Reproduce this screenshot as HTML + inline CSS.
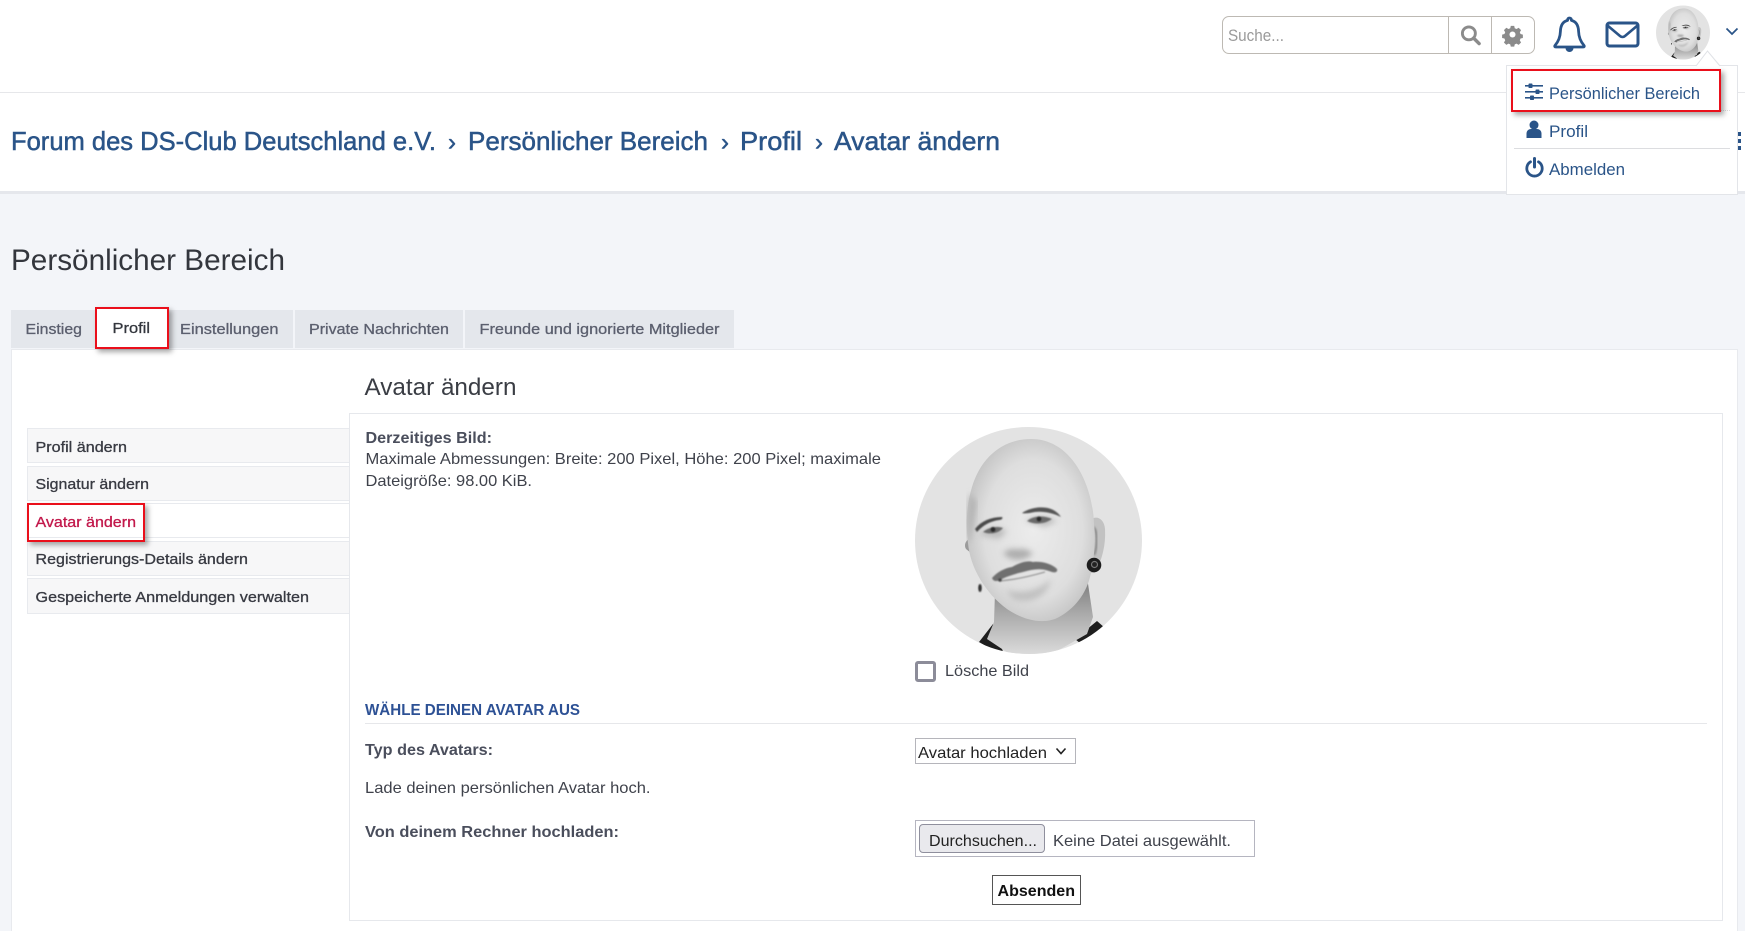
<!DOCTYPE html>
<html lang="de"><head><meta charset="utf-8"><title>Avatar ändern</title>
<style>
html,body{margin:0;padding:0;width:1745px;height:931px;overflow:hidden;background:#f3f5f9}
div{position:absolute;box-sizing:border-box}
svg{position:absolute;overflow:visible}
text{font-family:"Liberation Sans",sans-serif;white-space:pre}
.m{stroke:currentColor;stroke-width:.3px}
.h{stroke:currentColor;stroke-width:.5px}
.b{font-weight:700}
.nav{background:#f7f7f8;border:1px solid #e8eaee;border-right:0;left:27px;width:322px}
.tab{background:#e4e7ec;top:310px;height:38px}
.red{border:2px solid #ea0f1b;box-shadow:3px 3px 5px rgba(0,0,0,.35)}
</style></head><body>
<svg width="0" height="0" style="position:absolute">
<defs>
<radialGradient id="skin" cx=".52" cy=".5" r=".62"><stop offset="0" stop-color="#ececec"/><stop offset=".62" stop-color="#dedede"/><stop offset=".88" stop-color="#c4c4c4"/><stop offset="1" stop-color="#a6a6a6"/></radialGradient>
<linearGradient id="neck" x1="0" y1="0" x2="0" y2="1"><stop offset="0" stop-color="#777"/><stop offset=".45" stop-color="#a8a8a8"/><stop offset="1" stop-color="#dcdcdc"/></linearGradient>
<filter id="b05"><feGaussianBlur stdDeviation=".7"/></filter>
<filter id="b1"><feGaussianBlur stdDeviation="1"/></filter>
<filter id="b2"><feGaussianBlur stdDeviation="3"/></filter>
<clipPath id="cc"><circle cx="113.500" cy="113.500" r="113.500"/></clipPath>
<symbol id="face" viewBox="0 0 227 227">
<g clip-path="url(#cc)">
<rect width="227" height="227" fill="#e3e3e3"/>
<path d="M64 215L78 197L90 230Z" fill="#1e1e1e"/>
<path d="M160 212L182 194L190 201L172 222Z" fill="#1e1e1e"/>
<path d="M80 165L79 195L72 212L96 228L135 228L172 207L178 190L172 150Z" fill="url(#neck)"/>
<path d="M175 93C181 88 189 91 190 102C191 118 187 133 180 146L172 146Z" fill="#c2c2c2"/>
<path d="M178 100C183 104 183 118 179 128" fill="none" stroke="#7d7d7d" stroke-width="2" filter="url(#b1)"/>
<path d="M54 112C50 114 49 119 51 122L56 126Z" fill="#9a9a9a"/>
<path d="M116 12C88 12 66 30 57 60C51 80 51 98 53 116C55 140 70 166 92 182C108 193 126 197 140 192C156 185 170 170 175 150C179 135 181 112 179 97C178 60 158 12 116 12Z" fill="url(#skin)"/>
<path d="M55 66C51 86 52 104 54 118C58 105 60 90 62 75Z" fill="#b5b5b5" filter="url(#b2)"/>
<g filter="url(#b2)" opacity=".75">
<path d="M88 126C96 136 112 134 118 126L110 122L95 122Z" fill="#9c9c9c"/>
<path d="M90 162C104 168 124 164 136 152C132 172 112 178 98 172Z" fill="#b8b8b8"/>
<path d="M64 108C72 100 84 100 92 104L84 112Z" fill="#b0b0b0"/>
<path d="M110 94C120 88 132 88 142 94L130 100Z" fill="#b0b0b0"/>
</g>
<g filter="url(#b05)">
<path d="M60 102C66 94 76 90 87 90C88 91 87 93 84 93C76 94 68 98 62 105Z" fill="#4a4a4a"/>
<path d="M107 86C116 80 128 79 136 82C141 84 144 87 146 90C138 86 128 84 120 85C115 86 110 87 107 86Z" fill="#555"/>
<path d="M68 105C74 100 82 99 88 101C84 106 76 108 68 105Z" fill="#6b6b6b"/>
<path d="M112 94C118 89 128 88 137 92C130 97 120 98 112 94Z" fill="#6b6b6b"/>
<circle cx="78" cy="102.500" r="2.600" fill="#2c2c2c"/><circle cx="124" cy="92" r="2.600" fill="#2c2c2c"/>
<path d="M77 151C82 145 90 141 97 140C104 136 112 133 118 135C127 134 137 137 142 142C143 146 139 146 134 144C126 141 118 142 108 145C99 147 90 150 85 153C81 155 78 154 77 151Z" fill="#707070"/>
<path d="M84 154C98 153 116 149 130 145" fill="none" stroke="#8a8a8a" stroke-width="1.100"/>
<circle cx="85" cy="153" r="1.800" fill="#444"/>
</g>
<circle cx="179" cy="138" r="7.300" fill="#1d1d1d"/><circle cx="179.500" cy="137.500" r="3.600" fill="#777"/><circle cx="179.500" cy="137.500" r="2.400" fill="#222"/>
<ellipse cx="65" cy="161" rx="1.800" ry="4" fill="#333" filter="url(#b05)"/>
</g>
</symbol>
</defs></svg>

<!-- header -->
<div style="left:0;top:0;width:1745px;height:93px;background:#fff;border-bottom:1px solid #e6e7ea"></div>
<div style="left:0;top:93px;width:1745px;height:101px;background:#fff;border-bottom:3px solid #e5e7ec"></div>

<!-- search -->
<div style="left:1222px;top:16px;width:313px;height:38px;border:1px solid #bdb9b3;border-radius:7px;background:#fff"></div>
<div style="left:1448px;top:16px;width:1px;height:38px;background:#bdb9b3"></div>
<div style="left:1491px;top:16px;width:1px;height:38px;background:#bdb9b3"></div>
<svg style="left:1460px;top:24px" width="21" height="22" viewBox="0 0 22 22"><circle cx="9.300" cy="9.300" r="6.800" fill="none" stroke="#8b8b8b" stroke-width="3"/><path d="M14.300 14.300L20 20" stroke="#8b8b8b" stroke-width="3.600" stroke-linecap="round"/></svg>
<svg style="left:1503px;top:25px" width="19" height="19" viewBox="-10 -10 20 20"><path d="M-1.900-9.500h3.800l.6 2.600 2 .8 2.300-1.400 2.700 2.700-1.400 2.300.8 2 2.600.6v3.800l-2.600.6-.8 2 1.400 2.300-2.700 2.700-2.300-1.400-2 .8-.6 2.600h-3.800l-.6-2.600-2-.8-2.300 1.400-2.700-2.700 1.400-2.300-.8-2-2.600-.6v-3.800l2.600-.6.8-2-1.400-2.300 2.700-2.700 2.300 1.400 2-.8z" fill="#8b8b8b" transform="scale(.95)"/><circle r="3.200" fill="#fff"/></svg>

<!-- bell -->
<svg style="left:1553px;top:15px" width="33" height="37" viewBox="0 0 33 37"><path d="M16.500 3C15 3 14.600 4 14.600 5.400C9.500 6.600 7.600 11 7.400 16.500C7.200 23 5 27 2 30.500C1.400 31.300 1.800 32 2.800 32H30.200C31.200 32 31.600 31.300 31 30.500C28 27 25.800 23 25.600 16.500C25.400 11 23.500 6.600 18.400 5.400C18.400 4 18 3 16.500 3Z" fill="#fff" stroke="#2a5488" stroke-width="2.800" stroke-linejoin="round"/><path d="M12.500 33A4 4 0 0 0 20.500 33Z" fill="#2a5488"/></svg>
<!-- mail -->
<svg style="left:1605px;top:21px" width="35" height="27" viewBox="0 0 35 27"><rect x="2" y="2" width="31" height="23" rx="2.500" fill="#fff" stroke="#2a5488" stroke-width="3"/><path d="M2.500 4.500L15 15C16.500 16.300 18.500 16.300 20 15L32.500 4.500" fill="none" stroke="#2a5488" stroke-width="2.600"/></svg>
<!-- avatar small -->
<svg style="left:1656px;top:5px" width="54" height="55"><use href="#face" width="54" height="55"/></svg>
<svg style="left:1725px;top:27px" width="14" height="9" viewBox="0 0 14 9"><path d="M1.500 1.500L7 7L12.500 1.500" fill="none" stroke="#2a5488" stroke-width="1.700"/></svg>

<!-- kebab dots -->
<div style="left:1738px;top:132px;width:3px;height:4px;background:#2a5488"></div>
<div style="left:1738px;top:139px;width:3px;height:4px;background:#2a5488"></div>
<div style="left:1738px;top:146px;width:3px;height:4px;background:#2a5488"></div>

<!-- dropdown -->
<div style="left:1506px;top:65px;width:232px;height:130px;background:#fff;border:1px solid #e3e5e9"></div>
<svg style="left:1696px;top:50px" width="24" height="16" viewBox="0 0 24 16"><path d="M0 16L11.500 1L24 16" fill="#fff" stroke="#e0e2e6"/></svg>
<div style="left:1514px;top:110px;width:216px;height:1px;border-top:1px dotted #ddd"></div>
<div style="left:1514px;top:148px;width:216px;height:1px;background:#dcdde0"></div>
<div class="red" style="left:1511px;top:69px;width:210px;height:43px"></div>
<svg style="left:1525px;top:83px" width="18" height="18" viewBox="0 0 18 18" fill="#2a5488"><rect y="2" width="18" height="1.600"/><rect y="8" width="18" height="1.600"/><rect y="14" width="18" height="1.600"/><rect x="3.500" y="0.500" width="4" height="4.500" rx=".8"/><rect x="10.500" y="6.500" width="4" height="4.500" rx=".8"/><rect x="5" y="12.500" width="4" height="4.500" rx=".8"/></svg>
<svg style="left:1526px;top:120px" width="16" height="18" viewBox="0 0 16 18" fill="#2a5488"><circle cx="8" cy="5" r="4.500"/><path d="M0.500 18V13.500C0.500 10.500 3 9 5 9H11C13 9 15.500 10.500 15.500 13.500V18Z"/></svg>
<svg style="left:1525px;top:157px" width="19" height="20" viewBox="0 0 19 20"><path d="M5.500 4.800A7.700 7.700 0 1 0 13.500 4.800" fill="none" stroke="#2a5488" stroke-width="2.800" stroke-linecap="round"/><path d="M9.500 1.500V10" stroke="#2a5488" stroke-width="3" stroke-linecap="round"/></svg>

<!-- tabs -->
<div class="tab" style="left:11px;width:85px"></div>
<div class="tab" style="left:150px;width:143px"></div>
<div class="tab" style="left:295px;width:168px"></div>
<div class="tab" style="left:465px;width:269px"></div>

<!-- main panel -->
<div style="left:11px;top:349px;width:1727px;height:582px;background:#fff;border:1px solid #e8eaee;border-bottom:0"></div>
<div class="red" style="left:95px;top:307px;width:74px;height:42px;background:#fff"></div>

<!-- nav -->
<div class="nav" style="top:428px;height:35px"></div>
<div class="nav" style="top:466px;height:35px"></div>
<div class="nav" style="top:503px;height:35px;background:#fff"></div>
<div class="nav" style="top:541px;height:35px"></div>
<div class="nav" style="top:578px;height:36px"></div>
<div class="red" style="left:27px;top:503px;width:118px;height:39px"></div>

<!-- content -->
<div style="left:349px;top:413px;width:1374px;height:508px;background:#fff;border:1px solid #e6e8ec"></div>
<svg style="left:915px;top:427px" width="227" height="227"><use href="#face" width="227" height="227"/></svg>
<div style="left:915px;top:661px;width:21px;height:21px;border:3px solid #8c8c99;border-radius:3px;background:#fff"></div>
<div style="left:365px;top:723px;width:1342px;height:1px;background:#e6e7ea"></div>
<div style="left:915px;top:738px;width:161px;height:26px;border:1px solid #b5b5bb;background:#fff"></div>
<svg style="left:1055px;top:747px" width="12" height="9" viewBox="0 0 12 9"><path d="M1.500 1.500L6 6.500L10.500 1.500" fill="none" stroke="#222" stroke-width="1.600"/></svg>
<div style="left:915px;top:820px;width:340px;height:37px;border:1px solid #b5b5c0;background:#fff"></div>
<div style="left:919px;top:824px;width:126px;height:29px;border:1px solid #8f8f9d;border-radius:4px;background:#e9e9ed"></div>
<div style="left:992px;top:875px;width:89px;height:30px;border:1px solid #555;background:#fff"></div>

<!-- text -->
<svg style="left:0;top:0" width="1745" height="931" viewBox="0 0 1745 931">
<text x="1228" y="41" font-size="17" fill="#9a9a9a" textLength="56" lengthAdjust="spacingAndGlyphs">Suche...</text>
<g font-size="17" fill="#2a5488">
<text x="1549" y="99" textLength="151" lengthAdjust="spacingAndGlyphs">Persönlicher Bereich</text>
<text x="1549" y="137" textLength="39" lengthAdjust="spacingAndGlyphs">Profil</text>
<text x="1549" y="175" textLength="76" lengthAdjust="spacingAndGlyphs">Abmelden</text>
</g>
<g font-size="26" fill="#2a5488" color="#2a5488" class="h">
<text x="11" y="150" textLength="425" lengthAdjust="spacingAndGlyphs">Forum des DS-Club Deutschland e.V.</text>
<text x="448" y="150" font-size="24">›</text>
<text x="468" y="150" textLength="240" lengthAdjust="spacingAndGlyphs">Persönlicher Bereich</text>
<text x="721" y="150" font-size="24">›</text>
<text x="740" y="150" textLength="62" lengthAdjust="spacingAndGlyphs">Profil</text>
<text x="815" y="150" font-size="24">›</text>
<text x="834" y="150" textLength="166" lengthAdjust="spacingAndGlyphs">Avatar ändern</text>
</g>
<text x="11" y="270" font-size="30" fill="#33363d" textLength="274" lengthAdjust="spacingAndGlyphs">Persönlicher Bereich</text>
<g font-size="15" fill="#5b5f6e" color="#5b5f6e" class="m">
<text x="25.500" y="334" textLength="56.500" lengthAdjust="spacingAndGlyphs">Einstieg</text>
<text x="112.500" y="333" fill="#33363d" color="#33363d" textLength="37.500" lengthAdjust="spacingAndGlyphs">Profil</text>
<text x="180" y="334" textLength="98.500" lengthAdjust="spacingAndGlyphs">Einstellungen</text>
<text x="309" y="334" textLength="140" lengthAdjust="spacingAndGlyphs">Private Nachrichten</text>
<text x="479.500" y="334" textLength="240" lengthAdjust="spacingAndGlyphs">Freunde und ignorierte Mitglieder</text>
</g>
<g font-size="15" fill="#383a42" color="#383a42" class="m">
<text x="35.500" y="452" textLength="91.500" lengthAdjust="spacingAndGlyphs">Profil ändern</text>
<text x="35.500" y="489" textLength="113.500" lengthAdjust="spacingAndGlyphs">Signatur ändern</text>
<text x="35.500" y="527" fill="#c2184b" color="#c2184b" textLength="100.500" lengthAdjust="spacingAndGlyphs">Avatar ändern</text>
<text x="35.500" y="564" textLength="212.500" lengthAdjust="spacingAndGlyphs">Registrierungs-Details ändern</text>
<text x="35.500" y="602" textLength="273.500" lengthAdjust="spacingAndGlyphs">Gespeicherte Anmeldungen verwalten</text>
</g>
<text x="364.500" y="395" font-size="24" fill="#3a3d44" textLength="152" lengthAdjust="spacingAndGlyphs">Avatar ändern</text>
<text x="365.500" y="443" font-size="16" class="b" fill="#4a4e5c" textLength="126.500" lengthAdjust="spacingAndGlyphs">Derzeitiges Bild:</text>
<g font-size="16" fill="#3f424b">
<text x="365.500" y="464" textLength="515.500" lengthAdjust="spacingAndGlyphs">Maximale Abmessungen: Breite: 200 Pixel, Höhe: 200 Pixel; maximale</text>
<text x="365.500" y="486" textLength="166.500" lengthAdjust="spacingAndGlyphs">Dateigröße: 98.00 KiB.</text>
<text x="945" y="676" textLength="84" lengthAdjust="spacingAndGlyphs">Lösche Bild</text>
<text x="365" y="793" textLength="285.500" lengthAdjust="spacingAndGlyphs">Lade deinen persönlichen Avatar hoch.</text>
</g>
<text x="365" y="715" font-size="16" class="b" fill="#2d5195" textLength="215" lengthAdjust="spacingAndGlyphs">WÄHLE DEINEN AVATAR AUS</text>
<text x="365" y="755" font-size="16" class="b" fill="#4a4e5c" textLength="128" lengthAdjust="spacingAndGlyphs">Typ des Avatars:</text>
<text x="365" y="837" font-size="16" class="b" fill="#4a4e5c" textLength="254" lengthAdjust="spacingAndGlyphs">Von deinem Rechner hochladen:</text>
<text x="918" y="758" font-size="16" fill="#222" textLength="129" lengthAdjust="spacingAndGlyphs">Avatar hochladen</text>
<text x="929" y="846" font-size="16" fill="#222" textLength="108" lengthAdjust="spacingAndGlyphs">Durchsuchen...</text>
<text x="1053" y="846" font-size="16" fill="#3f424b" textLength="178" lengthAdjust="spacingAndGlyphs">Keine Datei ausgewählt.</text>
<text x="997.500" y="896" font-size="16" class="b" fill="#111" textLength="77.500" lengthAdjust="spacingAndGlyphs">Absenden</text>
</svg>
</body></html>
